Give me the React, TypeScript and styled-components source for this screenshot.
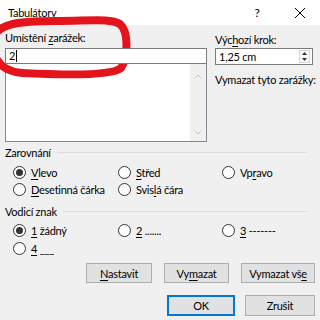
import styled, { createGlobalStyle } from 'styled-components';

const GlobalStyle = createGlobalStyle`
  html, body {
    margin: 0;
    padding: 0;
    background: #f0f0f0;
  }
  body {
    font-family: Lato, "Liberation Sans", sans-serif;
    font-size: 11px;
    letter-spacing: -0.25px;
    color: #000;
  }
`;

const Dialog = styled.div`
  position: relative;
  width: 320px;
  height: 320px;
  overflow: hidden;
  background: #f0f0f0;
`;

const TitleBar = styled.div`
  height: 25px;
  background: #fff;
  display: flex;
  align-items: center;
  padding-left: 8px;
`;

const Title = styled.div`
  flex: 1;
  color: #000;
`;

const TitleButton = styled.div<{ $w: number }>`
  width: ${(p) => p.$w}px;
  height: 25px;
  display: flex;
  align-items: center;
  justify-content: center;
  font-size: 12px;
  color: #000;
`;

const Body = styled.div`
  padding: 5px 5px 0 5px;
`;

const TopGrid = styled.div`
  display: grid;
  grid-template-columns: 202px 98px;
  column-gap: 8px;
`;

const Column = styled.div`
  display: flex;
  flex-direction: column;
`;

const Label = styled.div<{ $top?: number }>`
  height: 16px;
  line-height: 16px;
  margin-top: ${(p) => p.$top ?? 0}px;
  white-space: nowrap;
`;

const U = styled.span`
  text-decoration: underline;
  text-underline-offset: 2px;
`;

const TextInput = styled.div`
  box-sizing: border-box;
  height: 16px;
  margin-top: 2px;
  border: 1px solid #7a7a7a;
  background: #fff;
  padding-left: 3px;
  display: flex;
  align-items: center;
  line-height: 14px;
  position: relative;
  z-index: 1;
`;

const Caret = styled.span`
  display: inline-block;
  width: 1px;
  height: 12px;
  background: #000;
  margin-left: 1px;
`;

const ListBox = styled.div`
  box-sizing: border-box;
  height: 79px;
  margin-top: -1px;
  border: 1px solid #828790;
  background: #fff;
  display: flex;
  justify-content: flex-end;
`;

const ScrollTrack = styled.div`
  width: 16px;
  background: #f0f0f0;
  display: flex;
  flex-direction: column;
  justify-content: space-between;
  align-items: center;
  padding: 10px 0 6px;
`;

const SpinBox = styled.div`
  box-sizing: border-box;
  height: 17px;
  border: 1px solid #7a7a7a;
  background: #fff;
  display: flex;
  align-items: center;
`;

const SpinValue = styled.div`
  flex: 1;
  padding-left: 3px;
  line-height: 15px;
`;

const SpinButtons = styled.div`
  width: 11px;
  height: 13px;
  margin-right: 2px;
  border: 1px solid #d6d6d6;
  background: #f7f7f7;
  display: flex;
  flex-direction: column;
  align-items: center;
  justify-content: space-between;
  padding: 1px 0;
  box-sizing: border-box;
`;

const GroupHeader = styled.div<{ $top: number }>`
  display: flex;
  align-items: center;
  height: 16px;
  margin-top: ${(p) => p.$top}px;
  margin-right: 8px;
  gap: 6px;
  white-space: nowrap;
`;

const Rule = styled.div`
  flex: 1;
  height: 1px;
  background: #dcdcdc;
`;

const RadioGrid = styled.div<{ $top: number; $row: number }>`
  display: grid;
  grid-template-columns: 105px 104px 1fr;
  grid-auto-rows: ${(p) => p.$row}px;
  margin-top: ${(p) => p.$top}px;
  padding-left: 8px;
`;

const RadioItem = styled.div`
  display: flex;
  align-items: center;
  gap: 5px;
  white-space: nowrap;
`;

const RadioCircle = styled.span<{ $checked?: boolean }>`
  box-sizing: border-box;
  width: 13px;
  height: 13px;
  border-radius: 50%;
  border: 1px solid #333;
  background: #fff;
  display: flex;
  align-items: center;
  justify-content: center;

  &::after {
    content: '';
    display: ${(p) => (p.$checked ? 'block' : 'none')};
    width: 7px;
    height: 7px;
    border-radius: 50%;
    background: #333;
  }
`;

const ButtonRow = styled.div<{ $top: number; $gap: number }>`
  display: flex;
  justify-content: flex-end;
  gap: ${(p) => p.$gap}px;
  margin-top: ${(p) => p.$top}px;
`;

const Button = styled.div<{ $w: number; $h: number; $default?: boolean }>`
  box-sizing: border-box;
  width: ${(p) => p.$w}px;
  height: ${(p) => p.$h}px;
  background: #e1e1e1;
  border: 1px solid ${(p) => (p.$default ? '#0078d7' : '#adadad')};
  box-shadow: ${(p) => (p.$default ? 'inset 0 0 0 1px #0078d7' : 'none')};
  display: flex;
  align-items: center;
  justify-content: center;
  white-space: nowrap;
`;

const Annotation = styled.svg`
  position: absolute;
  left: 0;
  top: 0;
  pointer-events: none;
`;

function Radio({ checked, children }: { checked?: boolean; children: React.ReactNode }) {
  return (
    <RadioItem>
      <RadioCircle $checked={checked} />
      <span>{children}</span>
    </RadioItem>
  );
}

function Chevron({ up }: { up?: boolean }) {
  return (
    <svg width="8" height="5" viewBox="0 0 8 5">
      <path
        d={up ? 'M0.5 4.5 L4 1 L7.5 4.5' : 'M0.5 0.5 L4 4 L7.5 0.5'}
        fill="none"
        stroke="#c2c2c2"
        strokeWidth="1"
      />
    </svg>
  );
}

function Triangle({ up }: { up?: boolean }) {
  return (
    <svg width="5" height="3" viewBox="0 0 5 3">
      <path d={up ? 'M0 3 L2.5 0 L5 3 Z' : 'M0 0 L2.5 3 L5 0 Z'} fill="#333" />
    </svg>
  );
}

export default function App() {
  return (
    <>
      <GlobalStyle />
      <Dialog>
        <TitleBar>
          <Title>Tabulátory</Title>
          <TitleButton $w={46}>?</TitleButton>
          <TitleButton $w={40}>
            <svg width="10" height="10" viewBox="0 0 10 10">
              <path d="M0 0 L10 10 M10 0 L0 10" stroke="#000" strokeWidth="1" />
            </svg>
          </TitleButton>
        </TitleBar>
        <Body>
          <TopGrid>
            <Column>
              <Label>
                Umístění <U>z</U>arážek:
              </Label>
              <TextInput>
                2<Caret />
              </TextInput>
              <ListBox>
                <ScrollTrack>
                  <Chevron up />
                  <Chevron />
                </ScrollTrack>
              </ListBox>
            </Column>
            <Column>
              <Label $top={2}>
                Výc<U>h</U>ozí krok:
              </Label>
              <SpinBox>
                <SpinValue>1,25 cm</SpinValue>
                <SpinButtons>
                  <Triangle up />
                  <Triangle />
                </SpinButtons>
              </SpinBox>
              <Label $top={7}>Vymazat tyto zarážky:</Label>
            </Column>
          </TopGrid>

          <GroupHeader $top={2}>
            Zarovnání
            <Rule />
          </GroupHeader>
          <RadioGrid $top={4} $row={17}>
            <Radio checked>
              <U>V</U>levo
            </Radio>
            <Radio>
              <U>S</U>třed
            </Radio>
            <Radio>
              Vp<U>r</U>avo
            </Radio>
            <Radio>
              <U>D</U>esetinná čárka
            </Radio>
            <Radio>
              Svis<U>l</U>á čára
            </Radio>
          </RadioGrid>

          <GroupHeader $top={5}>
            Vodicí znak
            <Rule />
          </GroupHeader>
          <RadioGrid $top={2} $row={18}>
            <Radio checked>
              <U>1</U> žádný
            </Radio>
            <Radio>
              <U>2</U> .......
            </Radio>
            <Radio>
              <U>3</U> -------
            </Radio>
            <Radio>
              <U>4</U> ___
            </Radio>
          </RadioGrid>

          <ButtonRow $top={6} $gap={12}>
            <Button $w={66} $h={20}>
              <U>N</U>astavit
            </Button>
            <Button $w={65} $h={20}>
              Vy<U>m</U>azat
            </Button>
            <Button $w={74} $h={20}>
              Vymazat vš<U>e</U>
            </Button>
          </ButtonRow>
          <ButtonRow $top={12} $gap={10}>
            <Button $w={68} $h={21} $default>
              OK
            </Button>
            <Button $w={70} $h={21}>
              Zrušit
            </Button>
          </ButtonRow>
        </Body>

        <Annotation width="140" height="90" viewBox="0 0 140 90">
          <path
            d="M-6 36 C 0 24, 18 21, 55 21 C 90 21, 110 18, 120 24 C 129 32, 128 58, 121 68 C 112 76, 62 75, 22 73 C 8 72, 0 66, -4 58"
            fill="none"
            stroke="#e3141b"
            strokeWidth="8"
            strokeLinecap="round"
          />
        </Annotation>
      </Dialog>
    </>
  );
}
